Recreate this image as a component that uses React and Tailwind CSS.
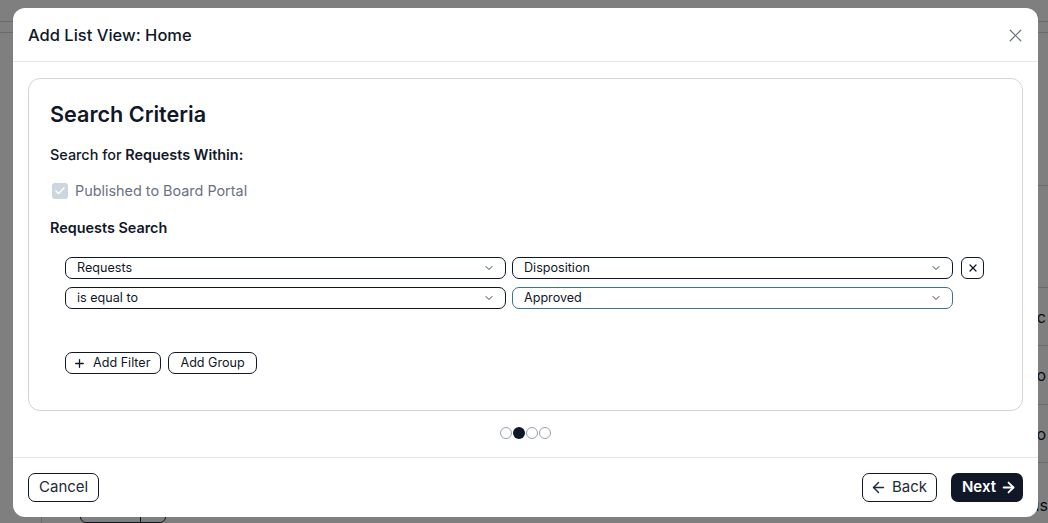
import { ChevronDown, X, Plus, ArrowLeft, ArrowRight, Check } from "lucide-react";

const font = { fontFamily: "Inter, 'Liberation Sans', sans-serif" };

const Select = ({ value, focused }) => (
    <div
        className={`flex h-[22px] flex-1 items-center justify-between rounded-[7px] border bg-white pl-[11px] pr-[10px] text-[12.6px] text-gray-900 ${
            focused ? "border-[#3f6f96]" : "border-gray-900"
        }`}
    >
        <span>{value}</span>
        <ChevronDown className="h-[12px] w-[12px] text-gray-700" strokeWidth={2} />
    </div>
);

// faint page behind the dialog
const BackPage = () => (
    <div className="flex h-[523px] flex-col bg-white">
        <div className="h-[30px] border-b border-gray-300" />
        <div className="h-[15px] border-b border-gray-300" />
        <div className="flex flex-1">
            <div className="w-[42px] border-r border-gray-300" />
            <div className="flex flex-1 flex-col pt-[113px]">
                <div className="h-[40px] border-b border-gray-300" />
                <div className="h-[102px] border-b border-gray-300" />
                <div className="flex h-[58px] items-center justify-end border-b border-gray-300 pr-[2px] text-[16px] text-gray-900">Public</div>
                <div className="flex h-[59px] items-center justify-end border-b border-gray-300 pr-[2px] text-[16px] text-gray-900">Do</div>
                <div className="flex h-[58px] items-center justify-end border-b border-gray-300 pr-[2px] text-[16px] text-gray-900">Do</div>
                <div className="flex items-start justify-between pl-[38px] pt-[30px] text-[16px] text-gray-900">
                    <div className="flex h-[30px] w-[86px] rounded-md border border-gray-800">
                        <div className="w-[60px] border-r border-gray-800" />
                    </div>
                    <span>Status</span>
                </div>
            </div>
        </div>
    </div>
);

export default function App() {
    return (
        <div className="relative h-[523px] w-[1048px] overflow-hidden" style={font}>
            <BackPage />
            <div className="absolute inset-0 bg-black/50" />

            <div className="absolute left-[13px] top-[8px] flex h-[509px] w-[1025px] flex-col rounded-xl bg-white">
                <div className="flex h-[54px] items-center justify-between border-b border-gray-200 pl-[15px] pr-[12px] pt-[1px]">
                    <h2 className="text-[16.5px] font-medium text-gray-900">Add List View: Home</h2>
                    <X className="h-[21px] w-[21px] text-gray-500" strokeWidth={1.4} />
                </div>

                <div className="flex flex-1 flex-col px-[15px] pt-[16px]">
                    <div className="h-[333px] rounded-xl border border-gray-300 px-[21px] pt-[21px]">
                        <h3 className="text-[21.6px] font-semibold leading-[28px] text-gray-900">Search Criteria</h3>
                        <p className="mt-[17px] text-[14.4px] leading-[20px] text-gray-900">
                            <span className="font-medium">Search for </span>
                            <span className="font-semibold">Requests Within:</span>
                        </p>
                        <label className="mt-[16px] flex items-center gap-[7px] pl-[2px] text-[14.4px] leading-[20px] text-gray-500">
                            <span className="flex h-[16px] w-[16px] items-center justify-center rounded-[3px] bg-[#cdd5df]">
                                <Check className="h-[12px] w-[12px] text-white" strokeWidth={3} />
                            </span>
                            Published to Board Portal
                        </label>
                        <p className="mt-[17px] text-[14.4px] font-semibold leading-[20px] text-gray-900">Requests Search</p>

                        <div className="ml-[15px] mr-[17px] mt-[19px] flex flex-col gap-[8px]">
                            <div className="flex items-center gap-[8px]">
                                <div className="flex flex-1 gap-[6px]">
                                    <Select value="Requests" />
                                    <Select value="Disposition" />
                                </div>
                                <button className="flex h-[22px] w-[23px] items-center justify-center rounded-[6px] border border-gray-900">
                                    <X className="h-[12px] w-[12px] text-gray-900" strokeWidth={2.5} />
                                </button>
                            </div>
                            <div className="flex items-center gap-[8px]">
                                <div className="flex flex-1 gap-[6px]">
                                    <Select value="is equal to" />
                                    <Select value="Approved" focused />
                                </div>
                                <div className="w-[23px]" />
                            </div>
                        </div>

                        <div className="ml-[15px] mt-[43px] flex gap-[7px]">
                            <button className="flex h-[22px] items-center gap-[7px] rounded-[7px] border border-gray-900 pl-[7px] pr-[10px] text-[12.6px] text-gray-900">
                                <Plus className="h-[13px] w-[13px]" strokeWidth={2.4} />
                                Add Filter
                            </button>
                            <button className="flex h-[22px] items-center rounded-[7px] border border-gray-900 px-[11px] text-[12.6px] text-gray-900">
                                Add Group
                            </button>
                        </div>
                    </div>

                    <div className="mt-[16px] flex justify-center gap-[1px]">
                        <span className="h-[12px] w-[12px] rounded-full border border-gray-400" />
                        <span className="h-[12px] w-[12px] rounded-full bg-gray-900" />
                        <span className="h-[12px] w-[12px] rounded-full border border-gray-400" />
                        <span className="h-[12px] w-[12px] rounded-full border border-gray-400" />
                    </div>
                </div>

                <div className="flex h-[60px] items-center justify-between border-t border-gray-200 px-[15px]">
                    <button className="flex h-[29px] items-center rounded-[7px] border border-gray-900 px-[10px] text-[15px] text-gray-800">
                        Cancel
                    </button>
                    <div className="flex gap-[14px]">
                        <button className="flex h-[29px] items-center gap-[5px] rounded-[7px] border border-gray-900 pl-[7px] pr-[9px] text-[15px] text-gray-800">
                            <ArrowLeft className="h-[17px] w-[17px]" strokeWidth={2} />
                            Back
                        </button>
                        <button className="flex h-[29px] items-center gap-[4px] rounded-[7px] bg-gray-900 pl-[11px] pr-[6px] text-[15px] font-semibold text-white">
                            Next
                            <ArrowRight className="h-[17px] w-[17px]" strokeWidth={2.5} />
                        </button>
                    </div>
                </div>
            </div>
        </div>
    );
}
